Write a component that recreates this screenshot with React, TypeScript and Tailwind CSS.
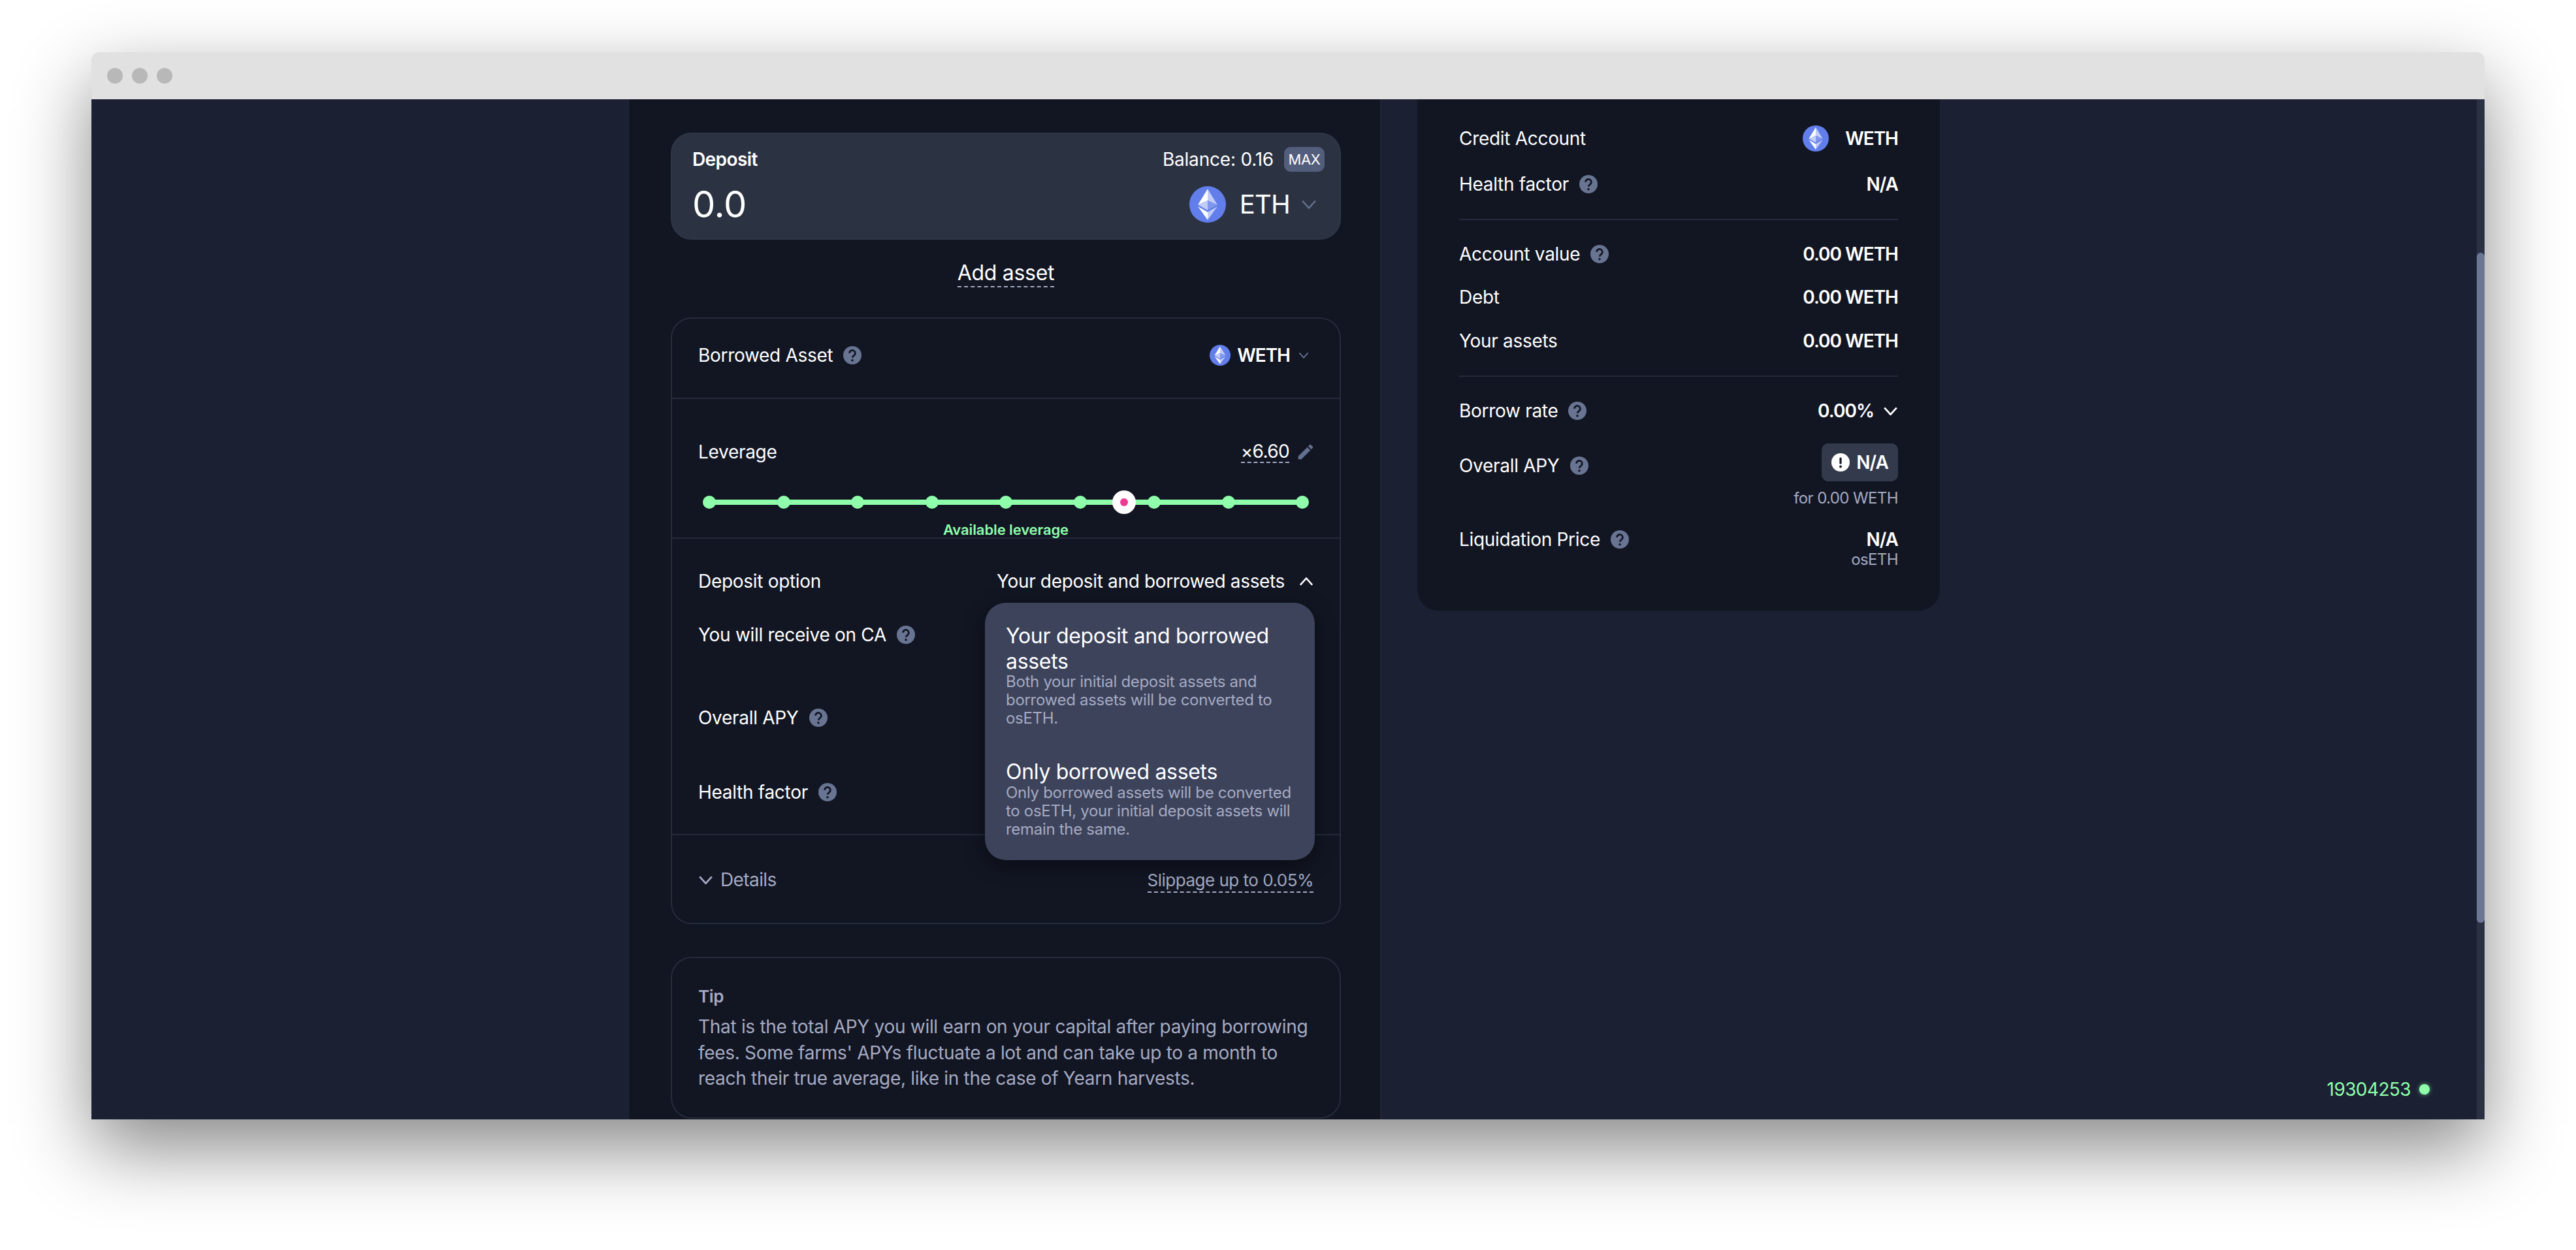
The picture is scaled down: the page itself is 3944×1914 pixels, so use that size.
const Eth = ({ className }: { className: string }) => (
  <svg viewBox="0 0 32 32" className={className}>
    <circle cx="16" cy="16" r="16" fill="#627EEA" />
    <g transform="translate(16 16) scale(1.13) translate(-16.5 -16)">
      <path fill="#fff" fillOpacity=".602" d="M16.498 4v8.87l7.497 3.35z" />
      <path fill="#fff" d="M16.498 4L9 16.22l7.498-3.35z" />
      <path fill="#fff" fillOpacity=".602" d="M16.498 21.968v6.027L24 17.616z" />
      <path fill="#fff" d="M16.498 27.995v-6.028L9 17.616z" />
      <path fill="#fff" fillOpacity=".2" d="M16.498 20.573l7.497-4.353-7.497-3.348z" />
      <path fill="#fff" fillOpacity=".602" d="M9 16.22l7.498 4.353v-7.701z" />
    </g>
  </svg>
);

const Help = () => (
  <svg viewBox="0 0 28 28" className="w-[28px] h-[28px] shrink-0">
    <circle cx="14" cy="14" r="14" fill="#687491" />
    <path d="M9.6 10.8a4.4 4.4 0 1 1 6.9 3.6c-1.5 1-2.5 1.7-2.5 3.4" fill="none" stroke="#121623" strokeWidth="2.8" />
    <circle cx="14" cy="21.8" r="1.8" fill="#121623" />
  </svg>
);

const Chevron = ({ className, color, up, sw = 2 }: { className: string; color: string; up?: boolean; sw?: number }) => (
  <svg viewBox="0 0 24 14" className={className}>
    <path d={up ? "M2 12.5 12 1.5l10 11" : "M2 1.5l10 11 10-11"} fill="none" stroke={color} strokeWidth={sw} />
  </svg>
);

const Label = ({ text, help }: { text: string; help?: boolean }) => (
  <div className="flex items-center gap-[16px] h-[36px] text-[28px] leading-[36px] text-white">
    <span>{text}</span>
    {help && <Help />}
  </div>
);

const Val = ({ children }: { children: React.ReactNode }) => (
  <span className="text-[28px] leading-[36px] font-semibold tracking-[-1px] text-white">{children}</span>
);

const Dashed = ({ children, className }: { children: React.ReactNode; className: string }) => (
  <span className={`border-b-2 border-dashed border-[#a6aac2] ${className}`}>{children}</span>
);

export default function App() {
  return (
    <div className="min-h-[1914px] bg-white pt-[80px] pl-[140px] [font-family:Inter,sans-serif] tracking-[-0.3px]">
      <div className="w-[3664px] h-[1634px] rounded-t-[12px] shadow-[0_45px_115px_rgba(0,0,0,0.47)] flex flex-col overflow-hidden">
        <div className="h-[72px] bg-[#e1e1e1] flex items-center gap-[14px] pl-[24px] shrink-0">
          <div className="w-[24px] h-[24px] rounded-full bg-[#b8b8b8]" />
          <div className="w-[24px] h-[24px] rounded-full bg-[#b8b8b8]" />
          <div className="w-[24px] h-[24px] rounded-full bg-[#b8b8b8]" />
        </div>

        <div className="relative flex-1 flex items-start bg-[#1b2133] overflow-hidden">
          <div className="w-[821px] shrink-0" />

          {/* middle column */}
          <div className="w-[1154px] h-[1562px] shrink-0 bg-[#121623] border-x-2 border-[#1f2536] pt-[51px] pl-[64px] pr-[60px] overflow-hidden">
            <div className="h-[164px] rounded-[32px] bg-[#2b3242] border-2 border-[#2f3648] pl-[31px] pr-[23px] pt-[20px]">
              <div className="flex items-center justify-between h-[38px]">
                <span className="text-[28px] font-semibold tracking-[-0.6px] text-white">Deposit</span>
                <div className="flex items-center gap-[16px]">
                  <span className="text-[28px] tracking-[-0.2px] text-white">Balance: 0.16</span>
                  <span className="h-[38px] w-[62px] rounded-[10px] bg-[#535d7c] text-[22px] leading-[38px] text-center text-white">MAX</span>
                </div>
              </div>
              <div className="flex items-center justify-between mt-[22px] h-[56px]">
                <span className="text-[56px] leading-[56px] text-white">0.0</span>
                <div className="flex items-center pr-[12px]">
                  <Eth className="w-[56px] h-[56px]" />
                  <span className="ml-[21px] text-[40px] leading-[56px] tracking-[-0.8px] text-white">ETH</span>
                  <Chevron className="ml-[17px] w-[24px] h-[14px]" color="#64708f" sw={2.6} />
                </div>
              </div>
            </div>

            <div className="flex justify-center mt-[31px] h-[40px]">
              <Dashed className="text-[32px] leading-[40px] h-[42px] text-white">Add asset</Dashed>
            </div>

            <div className="mt-[48px] rounded-[32px] border-2 border-[#252b3b]">
              <div className="h-[123px] flex items-center justify-between px-[40px] pb-[10px] border-b-2 border-[#252b3b]">
                <Label text="Borrowed Asset" help />
                <div className="flex items-center pr-[7px]">
                  <Eth className="w-[32px] h-[32px]" />
                  <span className="ml-[10px]"><Val>WETH</Val></span>
                  <Chevron className="ml-[13px] w-[16px] h-[10px]" color="#64708f" sw={2.8} />
                </div>
              </div>

              <div className="h-[214px] px-[40px] pt-[63px] border-b-2 border-[#252b3b]">
                <div className="flex items-center justify-between">
                  <Label text="Leverage" />
                  <div className="flex items-center gap-[10px] -mr-[3px]">
                    <Dashed className="text-[28px] leading-[32px] tracking-[-0.6px] text-white">×6.60</Dashed>
                    <svg viewBox="0 0 24 24" className="w-[30px] h-[30px]">
                      <path fill="#64708f" d="M3 17.25V21h3.75L17.81 9.94l-3.75-3.75L3 17.25zM20.71 7.04c.39-.39.39-1.02 0-1.41l-2.34-2.34c-.39-.39-1.02-.39-1.41 0l-1.83 1.83 3.75 3.75 1.83-1.83z" />
                    </svg>
                  </div>
                </div>
                <div className="relative mt-[41px] mx-[7px] h-[36px] flex items-center justify-between">
                  <div className="absolute left-[10px] right-[10px] top-[14px] h-[8px] bg-[#8fffab]" />
                  {[0, 1, 2, 3, 4, 5, 6, 7, 8].map((i) => (
                    <div key={i} className="relative w-[20px] h-[20px] rounded-full bg-[#8fffab]" />
                  ))}
                  <div className="absolute left-[627px] top-0 w-[36px] h-[36px] rounded-full bg-white flex items-center justify-center">
                    <div className="w-[12px] h-[12px] rounded-full bg-[#ec3a96]" />
                  </div>
                </div>
                <div className="mt-[11px] text-center text-[22px] leading-[26px] font-semibold tracking-[-0.1px] text-[#8fffab]">Available leverage</div>
              </div>

              <div className="relative h-[454px] px-[40px] pt-[47px] border-b-2 border-[#252b3b]">
                <div className="flex items-center justify-between">
                  <Label text="Deposit option" />
                  <div className="flex items-center gap-[22px]">
                    <span className="text-[28px] leading-[36px] tracking-[-0.35px] text-white">Your deposit and borrowed assets</span>
                    <Chevron className="w-[22px] h-[13px]" color="#ffffff" up sw={2.8} />
                  </div>
                </div>
                <div className="mt-[46px]"><Label text="You will receive on CA" help /></div>
                <div className="mt-[91px]"><Label text="Overall APY" help /></div>
                <div className="mt-[78px]"><Label text="Health factor" help /></div>

                <div className="absolute z-10 top-[98px] right-[38px] w-[505px] h-[394px] rounded-[32px] bg-[#3c435b] px-[32px] pt-[31px] shadow-[0_8px_32px_rgba(0,0,0,0.45)]">
                  <div className="text-[32px] leading-[39px] text-white">Your deposit and borrowed<br />assets</div>
                  <div className="-mt-[2px] text-[24px] leading-[28px] tracking-[-0.3px] text-[#a6aac2]">Both your initial deposit assets and<br />borrowed assets will be converted to<br />osETH.</div>
                  <div className="mt-[48px] text-[32px] leading-[39px] text-white">Only borrowed assets</div>
                  <div className="-mt-[1px] text-[24px] leading-[28px] tracking-[-0.3px] text-[#a6aac2]">Only borrowed assets will be converted<br />to osETH, your initial deposit assets will<br />remain the same.</div>
                </div>
              </div>

              <div className="h-[134px] px-[40px] pt-[50px] flex items-start justify-between">
                <div className="flex items-center gap-[11px] h-[36px] text-[28px] text-[#a6aac2]">
                  <Chevron className="w-[23px] h-[13px]" color="#a6aac2" sw={3} />
                  <span className="tracking-[-0.6px]">Details</span>
                </div>
                <Dashed className="mt-[2px] text-[26px] leading-[34px] tracking-[-0.5px] text-[#a6aac2]">Slippage up to 0.05%</Dashed>
              </div>
            </div>

            <div className="mt-[50px] h-[248px] rounded-[32px] border-2 border-[#252b3b] px-[40px] pt-[41px]">
              <div className="text-[26px] leading-[36px] font-semibold text-[#a6aac2]">Tip</div>
              <p className="mt-[9px] text-[28px] leading-[39.5px] text-[#a6aac2]">
                That is the total APY you will earn on your capital after paying borrowing<br />fees. Some farms' APYs fluctuate a lot and can take up to a month to<br />reach their true average, like in the case of Yearn harvests.
              </p>
            </div>
          </div>

          {/* right card */}
          <div className="ml-[55px] w-[800px] shrink-0 bg-[#121623] rounded-b-[32px] px-[64px] pt-[40px] pb-[64px]">
            <div className="flex items-center justify-between h-[40px]">
              <Label text="Credit Account" />
              <div className="flex items-center gap-[25px]">
                <Eth className="w-[40px] h-[40px]" />
                <Val>WETH</Val>
              </div>
            </div>
            <div className="flex items-center justify-between h-[40px] mt-[30px]">
              <Label text="Health factor" help />
              <Val>N/A</Val>
            </div>
            <div className="h-[2px] bg-[#252b3b] mt-[33px]" />
            <div className="flex items-center justify-between mt-[34px]">
              <Label text="Account value" help />
              <Val>0.00 WETH</Val>
            </div>
            <div className="flex items-center justify-between mt-[30px]">
              <Label text="Debt" />
              <Val>0.00 WETH</Val>
            </div>
            <div className="flex items-center justify-between mt-[31px]">
              <Label text="Your assets" />
              <Val>0.00 WETH</Val>
            </div>
            <div className="h-[2px] bg-[#252b3b] mt-[35px]" />
            <div className="flex items-center justify-between mt-[34px]">
              <Label text="Borrow rate" help />
              <div className="flex items-center gap-[14px]">
                <Val>0.00%</Val>
                <Chevron className="w-[23px] h-[13px]" color="#ffffff" sw={3} />
              </div>
            </div>
            <div className="flex items-start justify-between mt-[32px]">
              <div className="mt-[16px]"><Label text="Overall APY" help /></div>
              <div className="flex flex-col items-end">
                <div className="h-[58px] w-[117px] rounded-[10px] bg-[#333a4c] flex items-center justify-center gap-[10px]">
                  <svg viewBox="0 0 28 28" className="w-[28px] h-[28px]">
                    <circle cx="14" cy="14" r="14" fill="#fff" />
                    <rect x="12.4" y="6.5" width="3.2" height="10" rx="1.2" fill="#121623" />
                    <circle cx="14" cy="20.5" r="1.9" fill="#121623" />
                  </svg>
                  <Val>N/A</Val>
                </div>
                <span className="mt-[12px] text-[24px] leading-[28px] tracking-[-0.6px] text-[#a6aac2]">for 0.00 WETH</span>
              </div>
            </div>
            <div className="flex items-start justify-between mt-[31px]">
              <Label text="Liquidation Price" help />
              <div className="flex flex-col items-end">
                <Val>N/A</Val>
                <span className="-mt-[1px] text-[24px] leading-[28px] tracking-[-0.6px] text-[#a6aac2]">osETH</span>
              </div>
            </div>
          </div>

          {/* scrollbar */}
          <div className="absolute right-0 top-0 bottom-0 w-[12px] bg-[#2b3145]">
            <div className="absolute left-0 right-0 top-[235px] h-[1026px] rounded-full bg-[#6b7694]" />
          </div>

          {/* block number */}
          <div className="absolute right-[84px] bottom-[28px] flex items-center gap-[13px] text-[28px] leading-[36px] tracking-[-0.6px] text-[#8fffab]">
            <span>19304253</span>
            <div className="w-[16px] h-[16px] rounded-full bg-[#8fffab] shadow-[0_0_6px_rgba(143,255,171,0.6)]" />
          </div>
        </div>
      </div>
    </div>
  );
}
